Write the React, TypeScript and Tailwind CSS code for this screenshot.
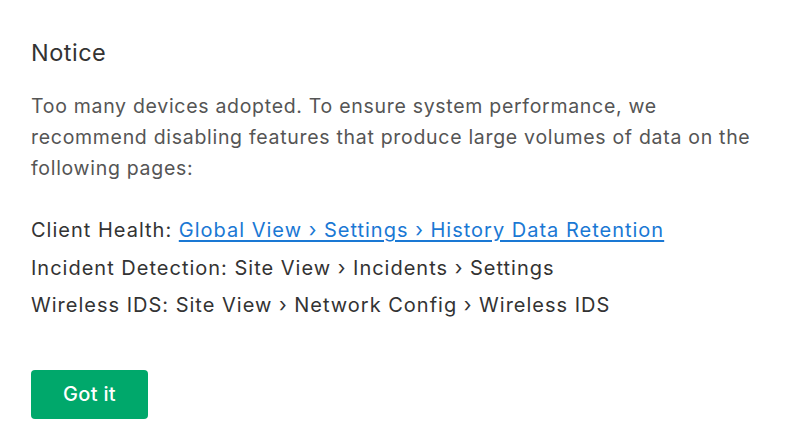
export default function App() {
  return (
    <main className="min-h-screen bg-white px-[31px] pt-[38px] text-[#333] [font-family:Inter,'Liberation_Sans',sans-serif]">
      <h1 className="text-[23.5px] font-normal leading-[30px] tracking-[0.5px] text-[#333]">Notice</h1>
      <p className="mt-[23px] w-[740px] text-[19.5px] leading-[31px] tracking-[0.7px] text-[#555]">
        Too many devices adopted. To ensure system performance, we recommend disabling features that produce large
        volumes of data on the following pages:
      </p>
      <ul className="mt-[28px] text-[20px] leading-[37.5px] tracking-[1px] text-[#333]">
        <li>
          Client Health:{" "}
          <a href="#" className="text-[#1a78d4] underline underline-offset-[3px]">
            Global View › Settings › History Data Retention
          </a>
        </li>
        <li>Incident Detection: Site View › Incidents › Settings</li>
        <li>Wireless IDS: Site View › Network Config › Wireless IDS</li>
      </ul>
      <button className="mt-[45px] h-[49px] w-[117px] rounded bg-[#00a86b] text-[20px] font-medium tracking-[0.3px] text-white">
        Got it
      </button>
    </main>
  );
}
